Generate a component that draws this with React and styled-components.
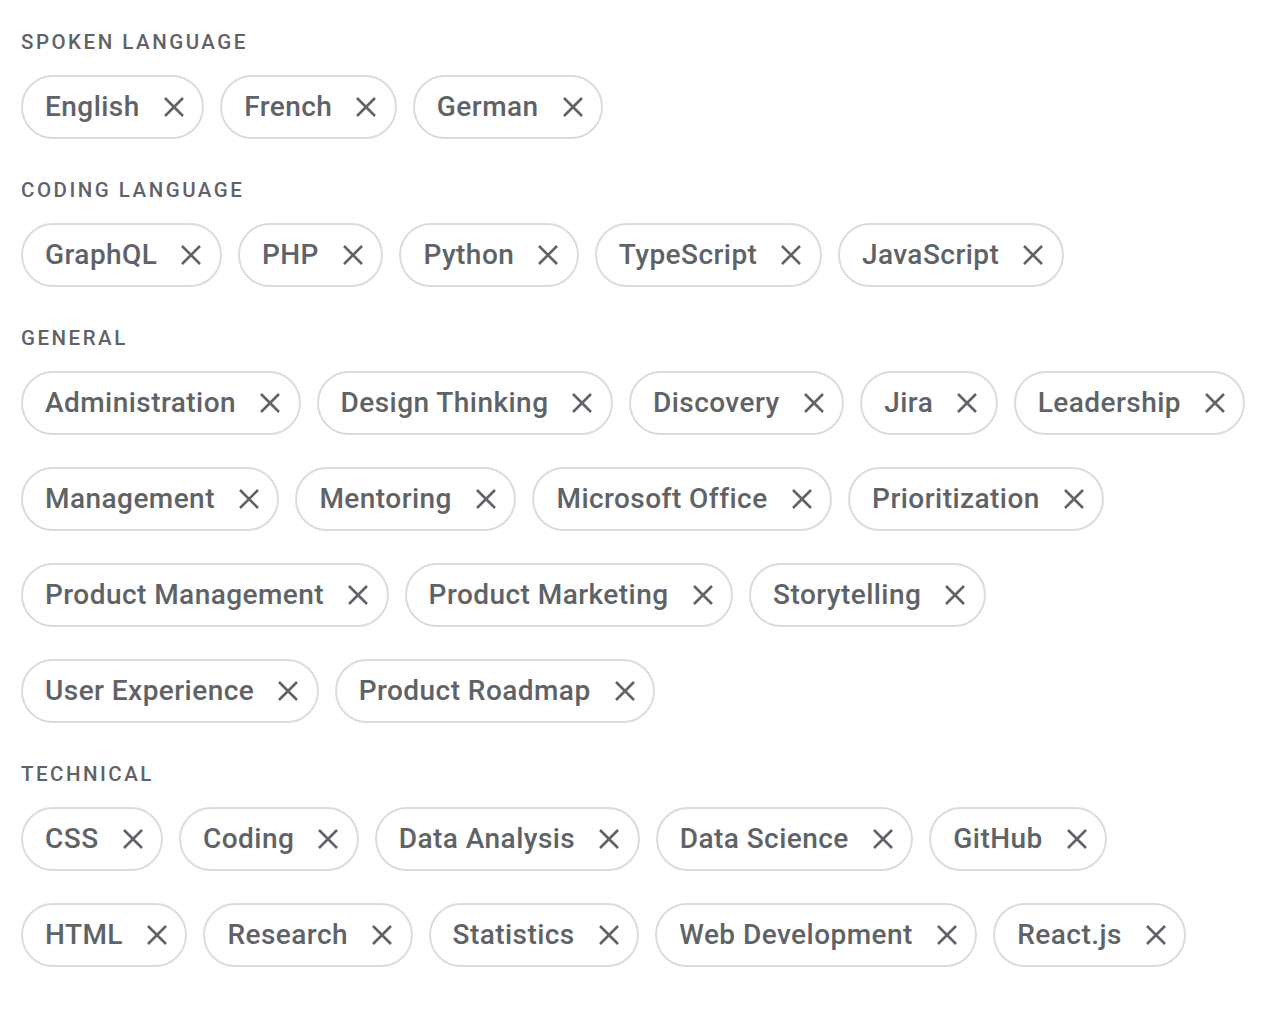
import React from 'react';
import styled, { createGlobalStyle } from 'styled-components';

const sections = [
    { title: 'Spoken Language', tags: ['English', 'French', 'German'] },
    { title: 'Coding Language', tags: ['GraphQL', 'PHP', 'Python', 'TypeScript', 'JavaScript'] },
    {
        title: 'General',
        tags: [
            'Administration', 'Design Thinking', 'Discovery', 'Jira', 'Leadership',
            'Management', 'Mentoring', 'Microsoft Office', 'Prioritization',
            'Product Management', 'Product Marketing', 'Storytelling',
            'User Experience', 'Product Roadmap',
        ],
    },
    {
        title: 'Technical',
        tags: [
            'CSS', 'Coding', 'Data Analysis', 'Data Science', 'GitHub',
            'HTML', 'Research', 'Statistics', 'Web Development', 'React.js',
        ],
    },
];

const GlobalStyle = createGlobalStyle`
    body {
        margin: 0;
        background: #fff;
        font-family: Roboto, "Liberation Sans", sans-serif;
    }
`;

const Page = styled.div`
    padding: 30px 21px;
    display: flex;
    flex-direction: column;
    gap: 39px;
`;

const Section = styled.section`
    display: flex;
    flex-direction: column;
    gap: 21px;
`;

const Heading = styled.h3`
    margin: 0;
    font-size: 20.5px;
    line-height: 24px;
    font-weight: 500;
    letter-spacing: 2.5px;
    text-transform: uppercase;
    color: #5f6368;
`;

const ChipList = styled.div`
    display: flex;
    flex-wrap: wrap;
    gap: 32px 16px;
`;

const Chip = styled.div`
    box-sizing: border-box;
    height: 64px;
    display: inline-flex;
    align-items: center;
    gap: 23px;
    padding: 0 17.5px 1px 22px;
    border: 2px solid #dcdcdf;
    border-radius: 32px;
    font-size: 28px;
    font-weight: 500;
    letter-spacing: 0.45px;
    color: #5f6368;
    white-space: nowrap;
`;

const CloseIcon = () => (
    <svg width="22" height="22" viewBox="0 0 22 22" fill="none">
        <path d="M2 2L20 20M20 2L2 20" stroke="#5f6368" strokeWidth="2.6" />
    </svg>
);

const App = () => (
    <>
        <GlobalStyle />
        <Page>
            {sections.map((section) => (
                <Section key={section.title}>
                    <Heading>{section.title}</Heading>
                    <ChipList>
                        {section.tags.map((tag) => (
                            <Chip key={tag}>
                                {tag}
                                <CloseIcon />
                            </Chip>
                        ))}
                    </ChipList>
                </Section>
            ))}
        </Page>
    </>
);

export default App;
